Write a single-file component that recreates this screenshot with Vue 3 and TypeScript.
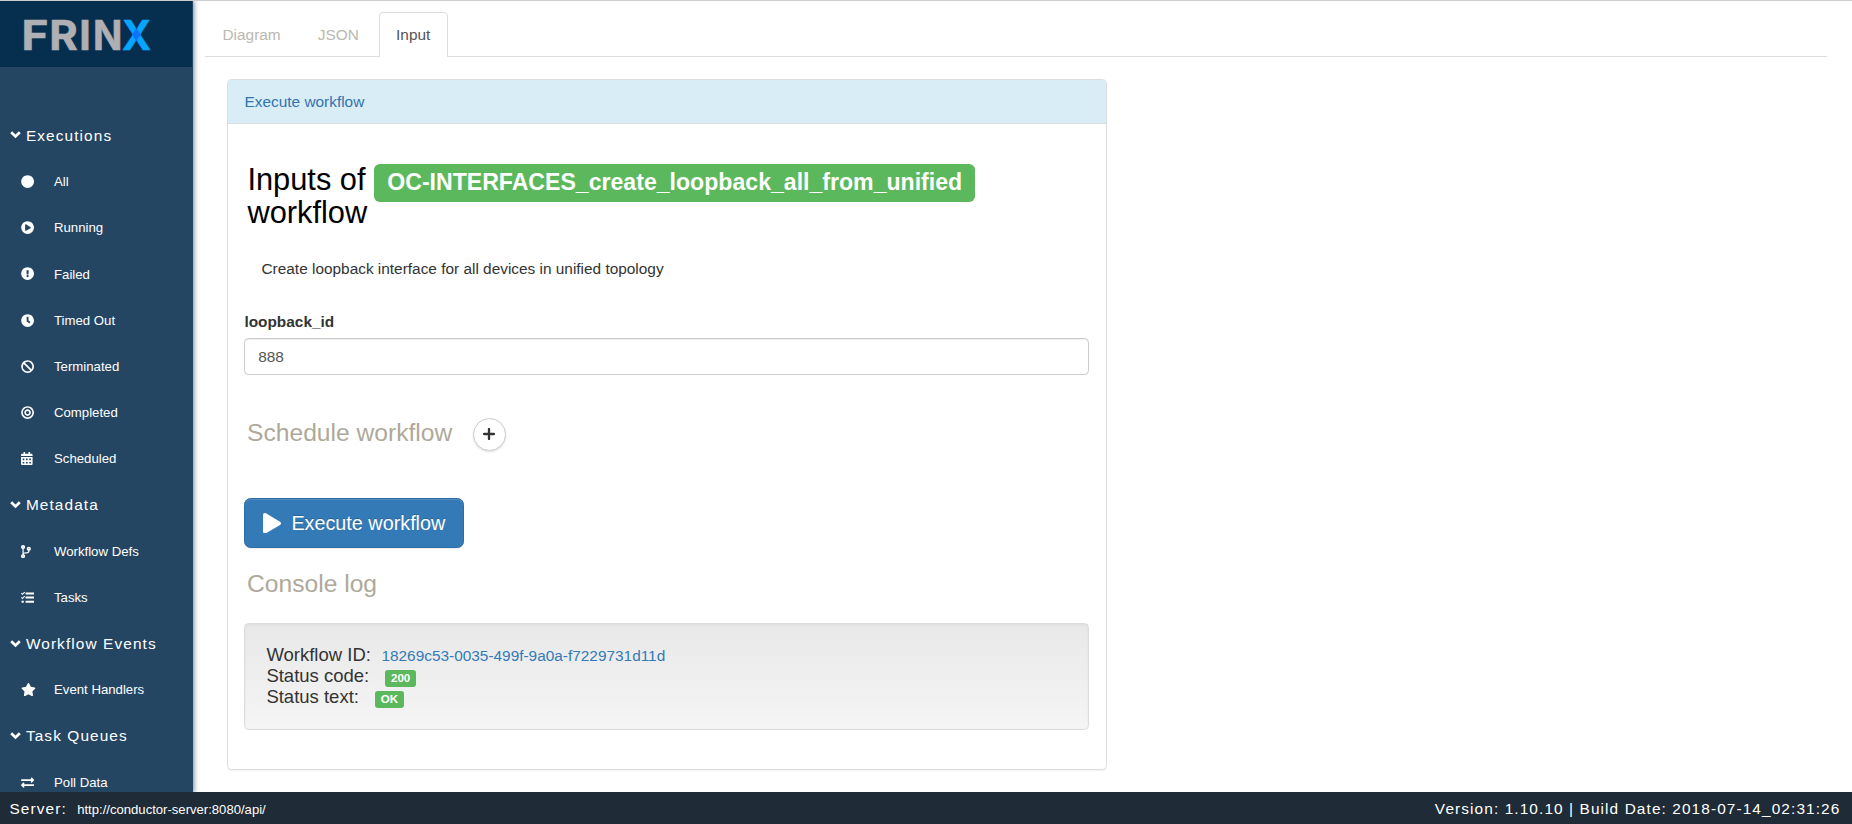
<script setup lang="ts">
import { ref } from 'vue'

interface NavItem {
  label: string
  icon: string
}
interface NavGroup {
  title: string
  items: NavItem[]
}
interface Icon {
  box: string
  width: number
  path: string
}

const disc = 'M256 8C119 8 8 119 8 256s111 248 248 248 248-111 248-248S393 8 256 8z'

const icons: Record<string, Icon> = {
  circle: { box: '0 0 512 512', width: 13.2, path: disc },
  play: {
    box: '0 0 512 512',
    width: 13.2,
    path: disc + 'm115.7 272l-176 101c-15.8 8.8-35.7-2.5-35.7-21V152c0-18.4 19.8-29.8 35.7-21l176 107c16.4 9.2 16.4 32.9 0 42z',
  },
  alert: {
    box: '0 0 512 512',
    width: 13.2,
    path: 'M504 256c0 136.997-111.043 248-248 248S8 392.997 8 256C8 119.083 119.043 8 256 8s248 111.083 248 248zm-248 50c-25.405 0-46 20.595-46 46s20.595 46 46 46 46-20.595 46-46-20.595-46-46-46zm-43.673-165.346l7.418 136c.347 6.364 5.609 11.346 11.982 11.346h48.546c6.373 0 11.635-4.982 11.982-11.346l7.418-136c.375-6.874-5.098-12.654-11.982-12.654h-63.383c-6.884 0-12.356 5.78-11.981 12.654z',
  },
  clock: {
    box: '0 0 512 512',
    width: 13.2,
    path: disc + 'm57.1 350.1L224.9 294c-3.1-2.3-4.9-5.9-4.9-9.7V116c0-6.6 5.4-12 12-12h48c6.6 0 12 5.4 12 12v137.7l63.5 46.2c5.4 3.9 6.5 11.4 2.6 16.8l-28.2 38.8c-3.9 5.3-11.4 6.5-16.8 2.6z',
  },
  ban: {
    box: '0 0 512 512',
    width: 13.2,
    path: disc + 'M386 126c64 64 71 163 21 235L151 105c72-50 171-43 235 21zM126 386c-64-64-71-163-21-235l256 256c-72 50-171 43-235-21z',
  },
  target: {
    box: '0 0 512 512',
    width: 13.2,
    path: disc + 'm0 432c-101.69 0-184-82.29-184-184s82.29-184 184-184 184 82.29 184 184-82.29 184-184 184zm0-312c-70.69 0-128 57.31-128 128s57.31 128 128 128 128-57.31 128-128-57.31-128-128-128zm0 192c-35.29 0-64-28.71-64-64s28.71-64 64-64 64 28.71 64 64-28.71 64-64 64z',
  },
  calendar: {
    box: '0 0 448 512',
    width: 11.6,
    path: 'M0 464c0 26.5 21.5 48 48 48h352c26.5 0 48-21.5 48-48V192H0zM64 256h64v64H64zM192 256h64v64h-64zM320 256h64v64h-64zM64 384h64v64H64zM192 384h64v64h-64zM320 384h64v64h-64zM400 64h-48V16c0-8.8-7.2-16-16-16h-32c-8.8 0-16 7.2-16 16v48H160V16c0-8.8-7.2-16-16-16h-32c-8.8 0-16 7.2-16 16v48H48C21.5 64 0 85.5 0 112v48h448v-48c0-26.5-21.5-48-48-48z',
  },
  branch: {
    box: '0 0 384 512',
    width: 9.9,
    path: 'M384 144c0-44.2-35.8-80-80-80s-80 35.8-80 80c0 36.4 24.3 67.1 57.5 76.8-.6 16.1-4.2 28.5-11 36.9-15.4 19.2-49.3 22.4-85.2 25.7-28.2 2.6-57.4 5.4-81.3 16.9v-144c32.5-10.2 56-40.5 56-76.3 0-44.2-35.8-80-80-80S0 35.8 0 80c0 35.8 23.5 66.1 56 76.3v199.3C23.5 365.9 0 396.2 0 432c0 44.2 35.8 80 80 80s80-35.8 80-80c0-34-21.2-63.1-51.2-74.6 3.1-5.2 7.8-9.8 14.9-13.4 16.2-8.2 40.4-10.4 66.1-12.8 42.2-3.9 90-8.4 118.2-43.4 14-17.4 21.1-39.8 21.6-67.9 31.6-10.8 54.4-40.7 54.4-75.9zM80 64c8.8 0 16 7.2 16 16s-7.2 16-16 16-16-7.2-16-16 7.2-16 16-16zm0 384c-8.8 0-16-7.2-16-16s7.2-16 16-16 16 7.2 16 16-7.2 16-16 16zm224-320c8.8 0 16 7.2 16 16s-7.2 16-16 16-16-7.2-16-16 7.2-16 16-16z',
  },
  tasks: {
    box: '0 0 512 512',
    width: 13.2,
    path: 'M192 56h304q16 0 16 16v48q0 16-16 16H192q-16 0-16-16V72q0-16 16-16zM192 216h304q16 0 16 16v48q0 16-16 16H192q-16 0-16-16v-48q0-16 16-16zM192 376h304q16 0 16 16v48q0 16-16 16H192q-16 0-16-16v-48q0-16 16-16zM0 100l28-28 28 28 74-74 28 28L56 156zM0 260l28-28 28 28 74-74 28 28L56 316zM64 368a48 48 0 1 0 .1 0z',
  },
  star: {
    box: '0 0 576 512',
    width: 14.9,
    path: 'M259.3 17.8L194 150.2 47.9 171.5c-26.2 3.8-36.7 36.1-17.7 54.6l105.7 103-25 145.5c-4.5 26.3 23.2 46 46.4 33.7L288 439.6l130.7 68.7c23.2 12.2 50.9-7.4 46.4-33.7l-25-145.5 105.7-103c19-18.5 8.5-50.8-17.7-54.6L382 150.2 316.7 17.8c-11.7-23.6-45.6-23.9-57.4 0z',
  },
  exchange: {
    box: '0 0 512 512',
    width: 13.2,
    path: 'M0 168v-16c0-13.255 10.745-24 24-24h360V80c0-21.367 25.899-32.042 40.971-16.971l80 80c9.372 9.373 9.372 24.569 0 33.941l-80 80C409.956 271.982 384 261.456 384 240v-48H24c-13.255 0-24-10.745-24-24zm488 152H128v-48c0-21.314-25.862-32.08-40.971-16.971l-80 80c-9.372 9.373-9.372 24.569 0 33.941l80 80C102.057 463.997 128 453.437 128 432v-48h360c13.255 0 24-10.745 24-24v-16c0-13.255-10.745-24-24-24z',
  },
}

const groups: NavGroup[] = [
  {
    title: 'Executions',
    items: [
      { label: 'All', icon: 'circle' },
      { label: 'Running', icon: 'play' },
      { label: 'Failed', icon: 'alert' },
      { label: 'Timed Out', icon: 'clock' },
      { label: 'Terminated', icon: 'ban' },
      { label: 'Completed', icon: 'target' },
      { label: 'Scheduled', icon: 'calendar' },
    ],
  },
  {
    title: 'Metadata',
    items: [
      { label: 'Workflow Defs', icon: 'branch' },
      { label: 'Tasks', icon: 'tasks' },
    ],
  },
  { title: 'Workflow Events', items: [{ label: 'Event Handlers', icon: 'star' }] },
  { title: 'Task Queues', items: [{ label: 'Poll Data', icon: 'exchange' }] },
]

const tabs = ['Diagram', 'JSON', 'Input']
const activeTab = ref('Input')
const loopbackId = ref('888')
</script>

<template>
  <div class="page">
    <div class="middle">
      <aside class="sidebar">
        <div class="brand">
          <svg class="logo" width="192" height="66" viewBox="0 0 192 66">
            <g class="logo-text">
              <text transform="translate(21.6 49) scale(1.12 1)">F</text>
              <text transform="translate(49.2 49) scale(1.06 1)">R</text>
              <text transform="translate(79.2 49)">I</text>
              <text transform="translate(92.9 49) scale(.94 1)">N</text>
            </g>
            <text class="logo-x" transform="translate(122 49) scale(.96 1)">X</text>
            <path d="M136.3 27.2l4.4 6.4-4.4 6.4-4.4-6.4z" fill="#0b73ff" />
          </svg>
        </div>
        <nav class="nav">
          <template v-for="group in groups" :key="group.title">
            <div class="nav-heading">
              <svg class="chevron" width="11" height="8" viewBox="0 0 11 8">
                <path d="M1.2 1.3L5.5 5.4l4.3-4.1" fill="none" stroke="#fff" stroke-width="2.8" />
              </svg>
              <span>{{ group.title }}</span>
            </div>
            <a v-for="item in group.items" :key="item.label" class="nav-item">
              <span class="nav-icon">
                <svg :width="icons[item.icon].width" height="13.2" :viewBox="icons[item.icon].box">
                  <path :d="icons[item.icon].path" fill="#fff" fill-rule="evenodd" />
                </svg>
              </span>
              <span>{{ item.label }}</span>
            </a>
          </template>
        </nav>
      </aside>

      <main class="main">
        <div class="tabs">
          <a
            v-for="tab in tabs"
            :key="tab"
            class="tab"
            :class="{ active: tab === activeTab }"
            @click="activeTab = tab"
          >{{ tab }}</a>
        </div>

        <section class="panel">
          <header class="panel-head">Execute workflow</header>
          <div class="panel-body">
            <h1 class="title">
              Inputs of <span class="label">OC-INTERFACES_create_loopback_all_from_unified</span><br>workflow
            </h1>
            <p class="description">Create loopback interface for all devices in unified topology</p>
            <label class="field-label" for="loopback">loopback_id</label>
            <input id="loopback" v-model="loopbackId" class="field" type="text">
            <div class="schedule">
              <h2 class="subtitle">Schedule workflow</h2>
              <button class="round" type="button" aria-label="Add schedule">
                <svg width="12" height="12" viewBox="0 0 12 12">
                  <path d="M6 1.1v9.8M1.1 6h9.8" stroke="#333" stroke-width="2.3" stroke-linecap="round" />
                </svg>
              </button>
            </div>
            <button class="execute" type="button">
              <svg width="18" height="20.6" viewBox="0 0 448 512">
                <path d="M424.4 214.7L72.4 6.6C43.8-10.3 0 6.1 0 47.9V464c0 37.5 40.7 60.1 72.4 41.3l352-208c31.4-18.5 31.5-64.1 0-82.6z" fill="#fff" />
              </svg>
              <span>Execute workflow</span>
            </button>
            <h2 class="subtitle console-title">Console log</h2>
            <div class="console">
              <div class="line">Workflow ID:<a class="id">18269c53-0035-499f-9a0a-f7229731d11d</a></div>
              <div class="line">Status code:<span class="label small code">200</span></div>
              <div class="line">Status text:<span class="label small text">OK</span></div>
            </div>
          </div>
        </section>
      </main>
    </div>

    <footer class="footer">
      <div><span class="server">Server:</span><span class="url">http://conductor-server:8080/api/</span></div>
      <div>Version: 1.10.10 | Build Date: 2018-07-14_02:31:26</div>
    </footer>
  </div>
</template>

<style>
body {
  margin: 0;
  overflow: hidden;
}
</style>

<style scoped>
.page,
.page * {
  box-sizing: border-box;
}
.page {
  display: flex;
  flex-direction: column;
  height: 824px;
  border-top: 1px solid #ccc;
  background: #fff;
  color: #333;
  font: 15.4px/22px "Liberation Sans", Arial, sans-serif;
}
.middle {
  display: flex;
  flex: 1;
  min-height: 0;
  overflow: hidden;
}
.sidebar {
  flex: none;
  width: 193px;
  background: #254663;
  box-shadow: 0 0 5px 1px #254663a6;
}
.brand {
  width: 192px;
  height: 66px;
  background: #062f4f;
}
.logo {
  display: block;
}
.logo-text,
.logo-x {
  font: 700 41px Inter, sans-serif;
  fill: #afafb4;
  stroke: #afafb4;
  stroke-width: 0.6px;
}
.logo-x {
  fill: #06a5ff;
  stroke: #06a5ff;
}
.nav {
  padding-top: 45.9px;
}
.nav-heading,
.nav-item {
  display: flex;
  align-items: center;
  height: 46.2px;
  color: #fff;
}
.nav-heading {
  padding-left: 9.5px;
  letter-spacing: 1.1px;
}
.chevron {
  margin: 0 5.4px 1px 0;
}
.nav-item {
  padding-left: 21px;
  font-size: 13.2px;
}
.nav-icon {
  display: flex;
  width: 33px;
  padding-bottom: 1px;
}
.main {
  flex: 1;
  padding: 11px 25px 0 12px;
}
.tabs {
  display: flex;
  gap: 2.2px;
  height: 45px;
  border-bottom: 1px solid #ddd;
}
.tab {
  height: 45px;
  padding: 11px 16.5px;
  border: 1px solid transparent;
  border-bottom: 0;
  border-radius: 4.4px 4.4px 0 0;
  color: #bab8b0;
}
.tab.active {
  border-color: #ddd;
  background: #fff;
  color: #555;
}
.panel {
  width: 880px;
  margin: 22px 0 0 22px;
  border: 1px solid #ddd;
  border-radius: 4.4px;
  box-shadow: 0 1px 1px rgba(0, 0, 0, 0.05);
}
.panel-head {
  padding: 11px 16.5px;
  border-bottom: 1px solid #ddd;
  border-radius: 3.4px 3.4px 0 0;
  background: #d9edf7;
  height: 44px;
  color: #3273ae;
}
.panel-body {
  display: flex;
  flex-direction: column;
  align-items: flex-start;
  padding: 39px 17px 39px 16px;
}
.title {
  margin: 0 0 28.5px 3.4px;
  color: #000;
  font-size: 30.8px;
  font-weight: 400;
  line-height: 33px;
}
.label {
  padding: 0.2em 0.57em 0.3em;
  border-radius: 0.25em;
  background: #5cb85c;
  color: #fff;
  font-size: 23.1px;
  font-weight: 700;
  line-height: 1;
  white-space: nowrap;
}
.description {
  margin: 0 0 31.5px 17.5px;
}
.field-label {
  margin-left: 0.4px;
  margin-bottom: 5px;
  font-weight: 700;
}
.field {
  width: 100%;
  height: 37px;
  padding: 0 13.2px;
  border: 1px solid #ccc;
  border-radius: 4.4px;
  box-shadow: inset 0 1px 1px rgba(0, 0, 0, 0.075);
  color: #555;
  font: inherit;
}
.schedule {
  display: flex;
  gap: 20.5px;
  margin: 43px 0 47px 3px;
}
.subtitle {
  margin: 1px 0 0;
  color: #aea99a;
  font-size: 24.64px;
  font-weight: 400;
  line-height: 27px;
}
.round {
  display: flex;
  align-items: center;
  justify-content: center;
  width: 33px;
  height: 33px;
  padding: 0 1px 1px 0;
  border: 1px solid #ccc;
  border-radius: 50%;
  background: #fff;
  box-shadow: 0 1px 2px rgba(0, 0, 0, 0.12);
}
.execute {
  display: flex;
  align-items: center;
  gap: 10.4px;
  width: 220px;
  height: 50px;
  padding: 0 0 0 18px;
  border: 1px solid #2e6da4;
  border-radius: 6.6px;
  background: #337ab7;
  box-shadow: inset 0 1px 0 rgba(255, 255, 255, 0.15), 0 1px 1px rgba(0, 0, 0, 0.075);
  color: #fff;
  font: 19.8px/22px "Liberation Sans", Arial, sans-serif;
  text-shadow: 0 -1px 0 rgba(0, 0, 0, 0.2);
  white-space: nowrap;
}
.console-title {
  margin: 22px 0 26px 3px;
}
.console {
  width: 100%;
  height: 107px;
  padding: 20px 21.4px;
  border: 1px solid #dcdcdc;
  border-radius: 4.4px;
  background: linear-gradient(#e8e8e8, #f5f5f5);
  box-shadow: inset 0 1px 3px rgba(0, 0, 0, 0.05), 0 1px 0 rgba(255, 255, 255, 0.1);
}
.line {
  height: 21px;
  font-size: 18.5px;
  line-height: 21px;
  white-space: nowrap;
}
.id {
  margin-left: 10.5px;
  color: #337ab7;
  font-size: 15.4px;
  line-height: 1;
}
.small {
  padding: 0.2em 0.5em 0.3em;
  font-size: 11.55px;
}
.code {
  margin-left: 16px;
}
.text {
  margin-left: 16px;
}
.footer {
  display: flex;
  justify-content: space-between;
  flex: none;
  height: 32px;
  padding: 5.5px 11.6px 0 9.5px;
  background: #1f2b36;
  color: #fff;
  letter-spacing: 1.1px;
}
.url {
  margin-left: 10.4px;
  font-size: 13.1px;
  letter-spacing: 0;
}
</style>
